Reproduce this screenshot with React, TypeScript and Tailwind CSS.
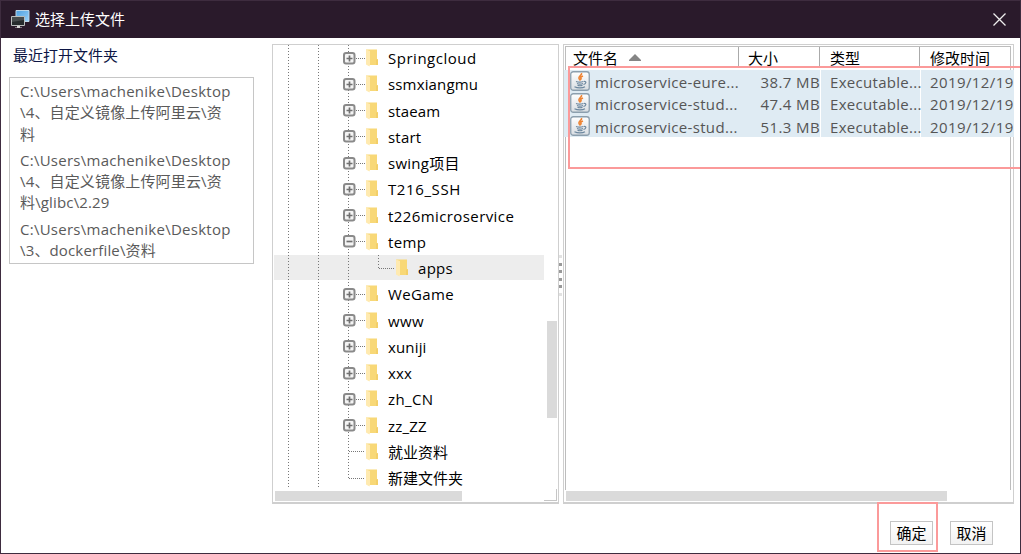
import React from "react";

const latin = "font-['Open_Sans','Noto_Sans_CJK_SC',sans-serif]";

type Node = { name: string; kind: "plus" | "minus" | "leaf" | "child"; cls: string };

const nodes: Node[] = [
  { name: "Springcloud", kind: "plus", cls: "tracking-[0.52px]" },
  { name: "ssmxiangmu", kind: "plus", cls: "tracking-[0.15px]" },
  { name: "staeam", kind: "plus", cls: "tracking-[0.15px]" },
  { name: "start", kind: "plus", cls: "tracking-[0.2px]" },
  { name: "swing项目", kind: "plus", cls: "tracking-[0.25px]" },
  { name: "T216_SSH", kind: "plus", cls: "tracking-[0.6px]" },
  { name: "t226microservice", kind: "plus", cls: "tracking-[0.41px]" },
  { name: "temp", kind: "minus", cls: "tracking-[0.4px]" },
  { name: "apps", kind: "child", cls: "tracking-[0.3px]" },
  { name: "WeGame", kind: "plus", cls: "tracking-[0.35px]" },
  { name: "www", kind: "plus", cls: "tracking-[0.4px]" },
  { name: "xuniji", kind: "plus", cls: "tracking-[0.15px]" },
  { name: "xxx", kind: "plus", cls: "tracking-[0.2px]" },
  { name: "zh_CN", kind: "plus", cls: "tracking-[0.4px]" },
  { name: "zz_ZZ", kind: "plus", cls: "tracking-[0.2px]" },
  { name: "就业资料", kind: "leaf", cls: "tracking-normal" },
  { name: "新建文件夹", kind: "leaf", cls: "tracking-normal" },
];

const recent = [
  ["C:\\Users\\machenike\\Desktop", "\\4、自定义镜像上传阿里云\\资", "料"],
  ["C:\\Users\\machenike\\Desktop", "\\4、自定义镜像上传阿里云\\资", "料\\glibc\\2.29"],
  ["C:\\Users\\machenike\\Desktop", "\\3、dockerfile\\资料"],
];

const files = [
  { name: "microservice-eure...", size: "38.7 MB" },
  { name: "microservice-stud...", size: "47.4 MB" },
  { name: "microservice-stud...", size: "51.3 MB" },
];

function Folder() {
  return (
    <svg width="14" height="18" viewBox="0 0 14 18" className="shrink-0">
      <path d="M1 .5h11v9.500l1 .5v5.500H4z" fill="#f8d877" />
      <path d="M12 10l1 .5V16h-2v-5z" fill="#f3cf69" />
      <path d="M1 .5l4 1.500v13.500L4.500 17.500 1 15.500z" fill="#ffeab0" />
    </svg>
  );
}

function Expander({ open }: { open: boolean }) {
  return (
    <svg width="13" height="13" viewBox="0 0 13 13" className="shrink-0">
      <rect x="1" y="1" width="10.500" height="10.500" rx="2" fill="#f4f4f4" stroke="#8a8a8a" strokeWidth="2" />
      <path d={open ? "M3.5 6.500h6" : "M3.5 6.500h6M6.500 3.500v6"} stroke="#707070" strokeWidth="1.700" />
    </svg>
  );
}

function Dots({ w }: { w: number }) {
  return (
    <svg width={w} height="1" className="shrink-0">
      <path d={`M0 .5H${w}`} stroke="#777" strokeDasharray="1 1" />
    </svg>
  );
}

function VLine({ h }: { h: number }) {
  return (
    <svg width="1" height={h} className="block">
      <path d={`M.5 0V${h}`} stroke="#777" strokeDasharray="1 2" />
    </svg>
  );
}

const indent = {
  plus: "relative flex items-center pl-[70px]",
  minus: "relative flex items-center pl-[70px]",
  leaf: "relative flex items-center pl-[76px]",
  child: "relative flex items-center pl-[106px]",
};

function TreeRow({ node }: { node: Node }) {
  const child = node.kind === "child";
  const expandable = node.kind === "plus" || node.kind === "minus";
  return (
    <div className="relative flex h-[26.25px] items-center">
      {child && (
        <div className="absolute top-0 left-[105px]">
          <VLine h={13} />
        </div>
      )}
      <div className={indent[node.kind]}>
        {expandable && <Expander open={node.kind === "minus"} />}
        <Dots w={expandable ? 9 : 16} />
        <Folder />
        <span className={`ml-[9px] text-[15px] leading-[20px] whitespace-pre text-black ${node.cls}`}>{node.name}</span>
      </div>
    </div>
  );
}

function JavaIcon() {
  return (
    <svg width="20" height="20" viewBox="0 0 20 20" className="shrink-0">
      <defs>
        <linearGradient id="tile" x1="0" y1="0" x2="0" y2="1">
          <stop offset="0" stopColor="#fff" />
          <stop offset="1" stopColor="#d8dde2" />
        </linearGradient>
      </defs>
      <rect x=".75" y=".75" width="18.500" height="18.500" rx="2.500" fill="url(#tile)" stroke="#8c9fae" strokeWidth="1.300" />
      <path d="M11.500 2c1 2-3.500 3.200-2.500 5.500L10.500 9.500M13 5c-3 1.200-2.500 2-1.500 3.500" fill="none" stroke="#ee8434" strokeWidth="1.600" />
      <path d="M6 10.500c2 .8 5 .8 7.500 0M7 12.500c2 .8 4 .8 6 0M7.500 14.300c1.600.6 3.400.6 5 0M4.500 15.800c3 1.500 8 1.500 10.500 0M14 10.500c3-.5 2 2.300-.5 3" fill="none" stroke="#6d889f" strokeWidth="1.200" />
    </svg>
  );
}

export default function App() {
  return (
    <div className={`relative flex h-[554px] w-[1021px] flex-col overflow-hidden border border-[#3e2c3f] bg-white ${latin}`}>
      <header className="flex h-[37px] shrink-0 items-center bg-[#2a1a2b] pr-[14px] pl-[10px]">
        <svg width="19" height="19" viewBox="0 0 19 19">
          <defs>
            <linearGradient id="blue" x1="0" y1="0" x2="1" y2="1">
              <stop offset="0" stopColor="#4d9fdf" />
              <stop offset="1" stopColor="#9ad2fa" />
            </linearGradient>
          </defs>
          <path d="M5 .5h13v11H5z" fill="url(#blue)" stroke="#bcd6e8" />
          <path d="M.5 6.500h13v9H.5z" fill="#252a2c" stroke="#b9bdbd" />
          <path d="M1 7h12v3L1 12z" fill="#464b4d" />
          <path d="M6 16h3v1.500h2V18H4v-.5h2z" fill="#d6d6d6" />
        </svg>
        <h1 className="ml-[5px] flex-1 pb-[2px] text-[15px] leading-[20px] text-white">选择上传文件</h1>
        <svg width="13" height="13" viewBox="0 0 13 13">
          <path d="M.5.5l12 12M12.500.5l-12 12" stroke="#eee" strokeWidth="1.300" />
        </svg>
      </header>

      <main className="flex h-[466px] shrink-0">
        <aside className="w-[271px] shrink-0 pt-[7px] pl-[8px]">
          <h2 className="pl-1 text-[15px] leading-[20px] text-[#0c1544]">最近打开文件夹</h2>
          <div className="mt-[12px] flex h-[187px] w-[245px] flex-col gap-[5px] border border-[#c6c6c6] pt-[3px] pl-[10px]">
            {recent.map((lines, i) => (
              <div key={i} className="text-[15px] leading-[21.3px] whitespace-pre text-[#5a5a5a]">
                {lines.map((l, j) => (
                  <div key={j} className={j === 0 ? "h-[21.3px] tracking-[0.26px]" : "h-[21.3px] tracking-[0.15px]"}>{l}</div>
                ))}
              </div>
            ))}
          </div>
        </aside>

        <section className="relative mt-[6px] h-[460px] w-[287px] shrink-0 overflow-hidden border border-b-2 border-[#cfcfcf]">
          <div className="absolute top-[210px] left-px h-[25px] w-[270px] bg-[#ededed]" />
          <div className="absolute top-0 left-[15px]"><VLine h={444} /></div>
          <div className="absolute top-0 left-[45px]"><VLine h={444} /></div>
          <div className="absolute top-0 left-[75px]"><VLine h={434} /></div>
          <div>
            {nodes.map((n) => <TreeRow key={n.name} node={n} />)}
          </div>
          <div className="absolute top-[276px] left-[274px] h-[97px] w-[10px] bg-[#dadada]" />
          <div className="absolute top-[446px] left-[2px] h-[10px] w-[187px] bg-[#dadada]" />
          <div className="absolute top-[444px] left-[271px] h-[12px] w-[13px] border-r border-b border-[#c6c6c6]" />
        </section>

        <div className="flex w-[4px] shrink-0 flex-col items-start gap-[4.500px] pt-[217px]">
          {[0, 1, 2, 3, 4, 5].map((i) => (
            <i key={i} className={i === 0 || i === 5 ? "block h-[3px] w-[3px] shrink-0 bg-[#e2e2e2]" : "block h-[3px] w-[3px] shrink-0 bg-[#999]"} />
          ))}
        </div>

        <section className="relative mt-[6px] h-[460px] w-[451px] shrink-0 border border-b-2 border-[#cfcfcf]">
          <div className="ml-px mt-px h-[444px] w-[446px] border border-b-0 border-[#bdbdbd]">
            <div className="flex h-[22px] text-[15px] leading-[22px] text-black">
              <div className="flex h-[21px] w-[173px] border-r border-[#aaa] pl-[7px]">
                文件名
                <svg width="12" height="7" className="mt-[7px] ml-[11px]"><path d="M6 0l6 6v1H0V6z" fill="#858585" /></svg>
              </div>
              <div className="h-[21px] w-[81px] border-r border-[#aaa] pl-[9px]">大小</div>
              <div className="h-[21px] w-[100px] border-r border-[#aaa] pl-[10px]">类型</div>
              <div className="pl-[10px]">修改时间</div>
            </div>
          </div>
          <div className="absolute top-[25px] left-0 w-[450px]">
            {files.map((f, i) => (
              <div key={i} className="flex h-[22.33px] text-[15px] leading-[24px] text-[#555]">
                <div className="flex h-full w-[256px] bg-[#dfebf3] pl-[6px]">
                  <div className="pt-[1px]"><JavaIcon /></div>
                  <span className="ml-[5px] w-[146px] shrink-0 tracking-[0.33px] whitespace-pre">{f.name}</span>
                  <span className="flex-1 text-right tracking-[0.4px] whitespace-pre">{f.size}</span>
                </div>
                <div className="ml-px h-full w-[99px] bg-[#dfebf3] pl-[9px] tracking-[0.3px] whitespace-pre">Executable...</div>
                <div className="ml-px h-full flex-1 bg-[#dfebf3] pl-[9px] tracking-[0.4px] whitespace-pre">2019/12/19</div>
              </div>
            ))}
          </div>
          <div className="absolute top-[446px] left-[2px] h-[10px] w-[381px] bg-[#dadada]" />
        </section>
      </main>

      <footer className="flex gap-[17px] pt-[17px] pl-[889px] text-[15px] leading-[22px] text-black">
        <button className="h-[24px] w-[43px] border border-[#c4c4c4] bg-gradient-to-b from-white to-[#f2f2f2] whitespace-nowrap">确定</button>
        <button className="h-[24px] w-[43px] border border-[#c4c4c4] bg-gradient-to-b from-white to-[#f2f2f2] whitespace-nowrap">取消</button>
      </footer>

      <div className="absolute top-[65px] left-[567px] h-[103px] w-[454px] border-2 border-[#fb9a9a]" />
      <div className="absolute top-[501px] left-[876px] h-[50px] w-[61px] border-2 border-[#fb9a9a]" />
    </div>
  );
}
